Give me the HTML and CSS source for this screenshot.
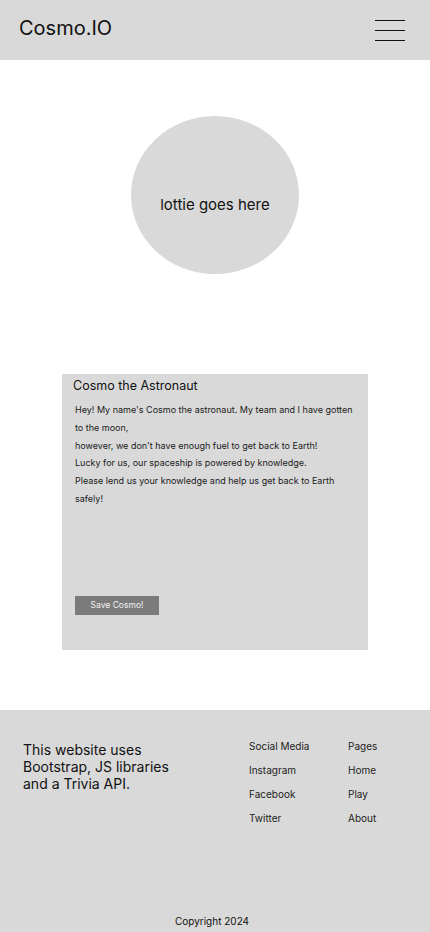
FILE: index.html
```html
<!DOCTYPE html>
<html lang="en">
<head>
<meta charset="utf-8">
<title>Cosmo.IO</title>
<link rel="stylesheet" href="styles.css">
</head>
<body>
<header class="topbar">
  <div class="brand">Cosmo.IO</div>
  <button class="burger" aria-label="Menu">
    <span></span><span></span><span></span>
  </button>
</header>
<main class="main">
  <div class="lottie">lottie goes here</div>
  <section class="card">
    <h2 class="card-title">Cosmo the Astronaut</h2>
    <div class="card-body">
      <p>Hey! My name's Cosmo the astronaut. My team and I have gotten to the moon,</p>
      <p>however, we don't have enough fuel to get back to Earth!</p>
      <p>Lucky for us, our spaceship is powered by knowledge.</p>
      <p>Please lend us your knowledge and help us get back to Earth safely!</p>
    </div>
    <button class="save">Save Cosmo!</button>
  </section>
</main>
<footer class="footer">
  <div class="footer-top">
    <p class="about">This website uses Bootstrap, JS libraries and a Trivia API.</p>
    <ul class="col col-social">
      <li>Social Media</li>
      <li>Instagram</li>
      <li>Facebook</li>
      <li>Twitter</li>
    </ul>
    <ul class="col col-pages">
      <li>Pages</li>
      <li>Home</li>
      <li>Play</li>
      <li>About</li>
    </ul>
  </div>
  <div class="copyright">Copyright 2024</div>
</footer>
</body>
</html>
```
FILE: styles.css
```css
* { box-sizing: border-box; }
html, body { margin: 0; padding: 0; }
body {
  font-family: Inter, "Noto Sans", sans-serif;
  color: #111;
  background: #fff;
  width: 430px;
}
.topbar {
  height: 60px;
  background: #d9d9d9;
  display: flex;
  align-items: center;
  justify-content: space-between;
  padding: 0 25px 0 19px;
}
.brand {
  font-size: 20px;
  line-height: 24px;
  margin-top: -4px;
  color: #111;
}
.burger {
  width: 30px;
  height: 21px;
  padding: 0;
  border: 0;
  background: transparent;
  display: flex;
  flex-direction: column;
  justify-content: space-between;
}
.burger span {
  display: block;
  height: 1px;
  width: 30px;
  background: #111;
}
.main {
  display: flex;
  flex-direction: column;
  align-items: center;
  padding: 56px 0 60px;
}
.lottie {
  width: 168px;
  height: 158px;
  border-radius: 50%;
  background: #d9d9d9;
  display: flex;
  align-items: center;
  justify-content: center;
  font-size: 15px;
  padding-top: 18px;
  color: #111;
}
.card {
  margin-top: 100px;
  width: 306px;
  height: 276px;
  background: #d9d9d9;
  padding: 4px 13px 0 11px;
}
.card-title {
  margin: 0;
  font-weight: 400;
  font-size: 12.5px;
  line-height: 16px;
  color: #111;
}
.card-body {
  margin-top: 7px;
  padding-left: 2px;
  width: 284px;
}
.card-body p {
  margin: 0;
  font-size: 9px;
  line-height: 17.8px;
  color: #1a1a1a;
}
.save {
  margin: 88px 0 0 2px;
  width: 84px;
  height: 19px;
  border: 0;
  background: #7b7b7b;
  color: #f2f2f2;
  font-family: Inter, "Noto Sans", sans-serif;
  font-size: 8.5px;
  padding: 0;
  display: block;
}
.footer {
  height: 222px;
  background: #d9d9d9;
  display: flex;
  flex-direction: column;
  padding: 31px 0 0;
}
.footer-top {
  display: grid;
  grid-template-columns: 226px 99px 1fr;
  padding-left: 23px;
  flex: 1;
}
.about {
  margin: 0;
  font-size: 14px;
  line-height: 17px;
  width: 160px;
  color: #111;
}
.col {
  list-style: none;
  margin: 0;
  padding: 0;
}
.col li {
  font-size: 10px;
  line-height: 24px;
  color: #222;
  margin: 0;
}
.col li:first-child { margin-top: -7px; }
.copyright {
  text-align: center;
  font-size: 10px;
  line-height: 12px;
  margin: 0 0 5px;
  padding-right: 6px;
  color: #111;
}
```
